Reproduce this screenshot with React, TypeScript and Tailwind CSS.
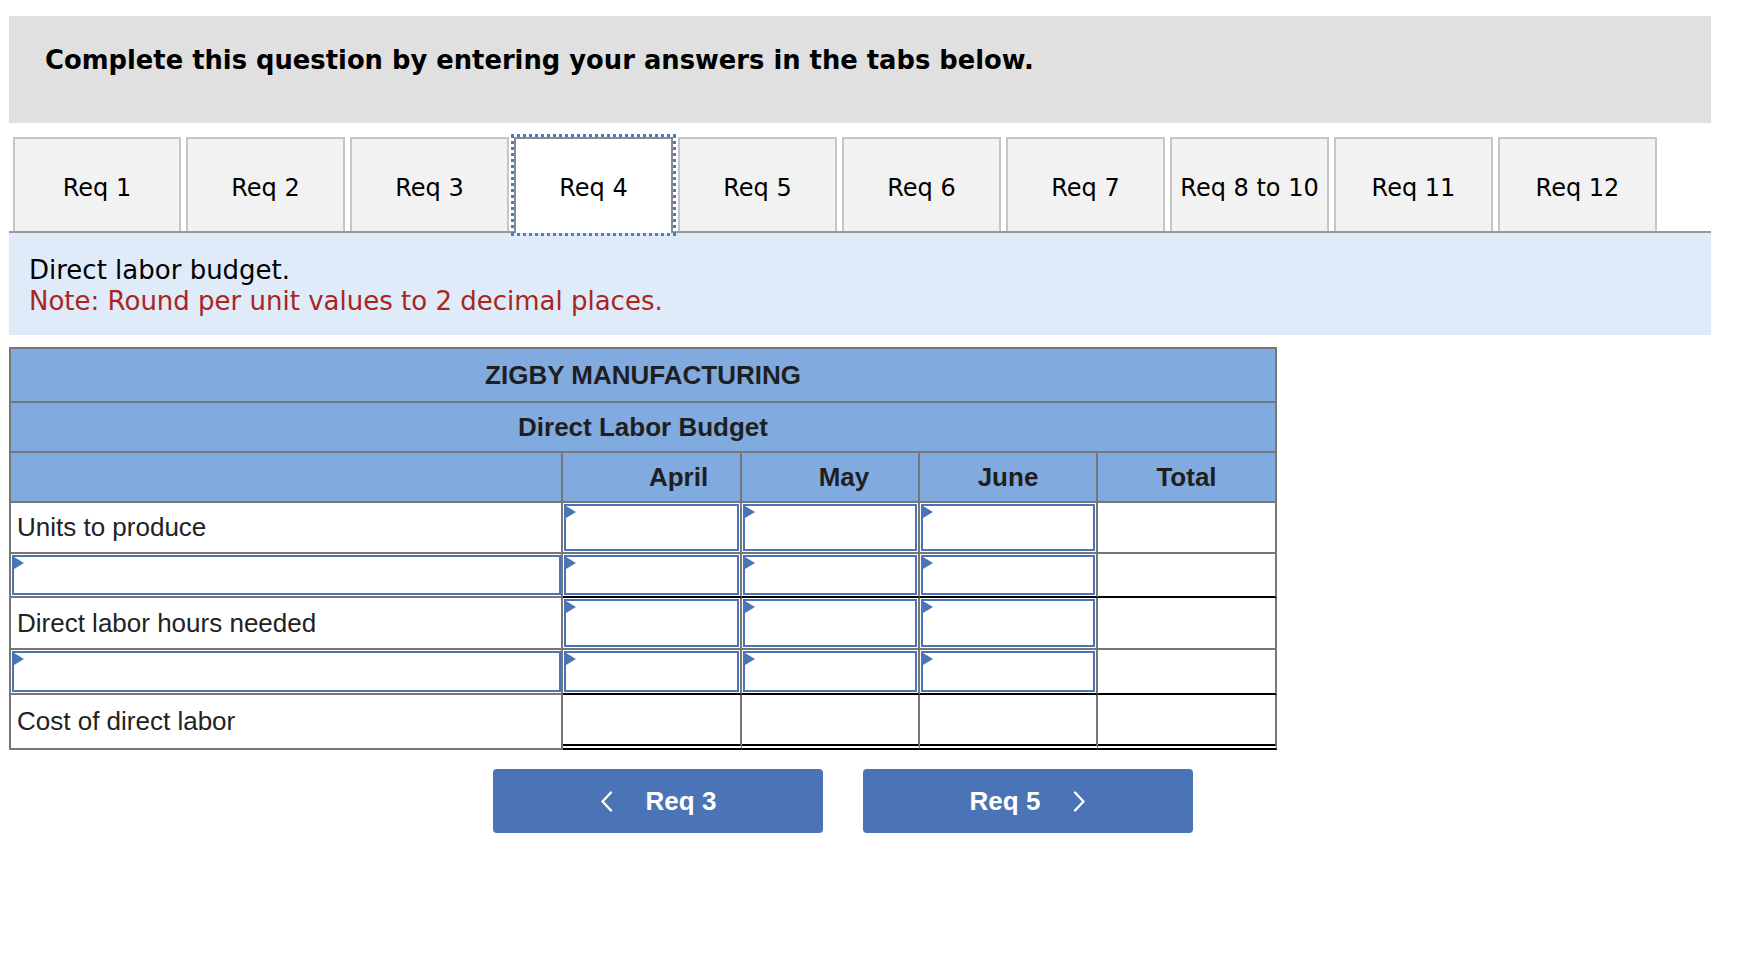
import React from "react";

const tabs = ["Req 1", "Req 2", "Req 3", "Req 4", "Req 5", "Req 6", "Req 7", "Req 8 to 10", "Req 11", "Req 12"];

function InputBox() {
  return (
    <div className="relative h-full w-full border-2 border-[#4a74b5] bg-white">
      <span className="absolute left-0 top-0 h-0 w-0 border-t-[6px] border-b-[6px] border-l-[10px] border-t-transparent border-b-transparent border-l-[#4a74b5]" />
    </div>
  );
}

function ChevronLeft() {
  return (
    <svg width="13" height="21" viewBox="0 0 13 21" fill="none">
      <polyline points="11,1.5 2.5,10.5 11,19.5" stroke="white" strokeWidth="2.4" strokeLinecap="round" strokeLinejoin="round" />
    </svg>
  );
}

function ChevronRight() {
  return (
    <svg width="13" height="21" viewBox="0 0 13 21" fill="none">
      <polyline points="2,1.5 10.5,10.5 2,19.5" stroke="white" strokeWidth="2.4" strokeLinecap="round" strokeLinejoin="round" />
    </svg>
  );
}

export default function App() {
  const gray = "border-r-2 border-b-2 border-[#777]";
  const hdr = "bg-[#81aadf] border-r-2 border-b-2 border-[#777] flex items-center font-bold text-[26px] text-[#1f1f1f]";
  const label = "bg-white border-r-2 border-b-2 border-[#777] flex items-center pl-[6px] text-[26px] text-[#222]";
  const inGray = "bg-white border-r-2 border-b-2 border-r-[#777] border-b-[#777] p-[1px]";
  const inBlack = "bg-white border-r-2 border-b-2 border-r-[#777] border-b-black p-[1px]";
  const plainGray = "bg-white border-r-2 border-b-2 border-r-[#777] border-b-[#777]";
  const plainBlack = "bg-white border-r-2 border-b-2 border-r-[#777] border-b-black";
  const dbl = "bg-white border-r-2 border-r-[#777] border-b-[6px] border-double border-b-black";

  return (
    <div className="w-[1742px] h-[974px] bg-white overflow-hidden">
      <div className="ml-[9px] w-[1702px] pt-[16px]">
        {/* Title */}
        <div className="h-[107px] bg-[#e0e0e0] pl-[36px] pt-[29px] font-['DejaVu_Sans',Verdana,sans-serif] font-bold text-[25.8px] leading-[31px] text-black">
          Complete this question by entering your answers in the tabs below.
        </div>

        {/* Tabs */}
        <div className="mt-[14px] flex items-end border-b-2 border-[#999] pl-[4px] font-['DejaVu_Sans',Verdana,sans-serif] text-[24px] text-black">
          {tabs.map((t, i) => {
            const active = i === 3;
            const w = i === 0 ? "w-[168px]" : "w-[159px] ml-[5px]";
            return active ? (
              <div
                key={t}
                className={`${w} relative z-10 -mb-[2px] flex h-[96px] items-center justify-center border-2 border-b-0 border-[#8a8a8a] bg-white pt-[4px] outline-[3px] outline-dotted outline-[#4a7dc4]`}
              >
                {t}
              </div>
            ) : (
              <div
                key={t}
                className={`${w} flex h-[94px] items-center justify-center border-2 border-b-0 border-[#c6c6c6] bg-[#f2f2f2] pt-[6px]`}
              >
                {t}
              </div>
            );
          })}
        </div>

        {/* Instruction */}
        <div className="bg-[#dfebf8] pl-[20px] pt-[22px] pb-[18px] font-['DejaVu_Sans',Verdana,sans-serif] text-[26px] leading-[31px]">
          <div className="text-black">Direct labor budget.</div>
          <div className="text-[#a8261e]">Note: Round per unit values to 2 decimal places.</div>
        </div>

        {/* Table */}
        <div className="mt-[12px] grid w-[1268px] grid-cols-[552px_179px_178px_178px_179px] grid-rows-[54px_50px_50px_51px_44px_52px_45px_55px] border-l-2 border-t-2 border-[#777] font-['Liberation_Sans',Arial,sans-serif]">
          <div className={`${hdr} col-span-5 justify-center`}>ZIGBY MANUFACTURING</div>
          <div className={`${hdr} col-span-5 justify-center`}>Direct Labor Budget</div>
          <div className={hdr}></div>
          <div className={`${hdr} justify-center pl-[54px]`}>April</div>
          <div className={`${hdr} justify-center pl-[28px]`}>May</div>
          <div className={`${hdr} justify-center`}>June</div>
          <div className={`${hdr} justify-center`}>Total</div>

          {/* Units to produce */}
          <div className={label}>Units to produce</div>
          <div className={inGray}><InputBox /></div>
          <div className={inGray}><InputBox /></div>
          <div className={inGray}><InputBox /></div>
          <div className={plainGray}></div>

          {/* blank row 1 */}
          <div className={`${gray} bg-white py-[1px] pl-[1px]`}><InputBox /></div>
          <div className={inBlack}><InputBox /></div>
          <div className={inBlack}><InputBox /></div>
          <div className={inBlack}><InputBox /></div>
          <div className={plainBlack}></div>

          {/* Direct labor hours needed */}
          <div className={label}>Direct labor hours needed</div>
          <div className={inGray}><InputBox /></div>
          <div className={inGray}><InputBox /></div>
          <div className={inGray}><InputBox /></div>
          <div className={plainGray}></div>

          {/* blank row 2 */}
          <div className={`${gray} bg-white py-[1px] pl-[1px]`}><InputBox /></div>
          <div className={inBlack}><InputBox /></div>
          <div className={inBlack}><InputBox /></div>
          <div className={inBlack}><InputBox /></div>
          <div className={plainBlack}></div>

          {/* Cost of direct labor */}
          <div className={label}>Cost of direct labor</div>
          <div className={dbl}></div>
          <div className={dbl}></div>
          <div className={dbl}></div>
          <div className={dbl}></div>
        </div>

        {/* Nav buttons */}
        <div className="mt-[19px] flex gap-[40px] pl-[484px] font-['Liberation_Sans',Arial,sans-serif] text-[26px] font-bold text-white">
          <button className="flex h-[64px] w-[330px] items-center justify-center gap-[33px] rounded-[4px] bg-[#4a74b5]">
            <ChevronLeft />
            <span>Req 3</span>
          </button>
          <button className="flex h-[64px] w-[330px] items-center justify-center gap-[33px] rounded-[4px] bg-[#4a74b5]">
            <span>Req 5</span>
            <ChevronRight />
          </button>
        </div>
      </div>
    </div>
  );
}
